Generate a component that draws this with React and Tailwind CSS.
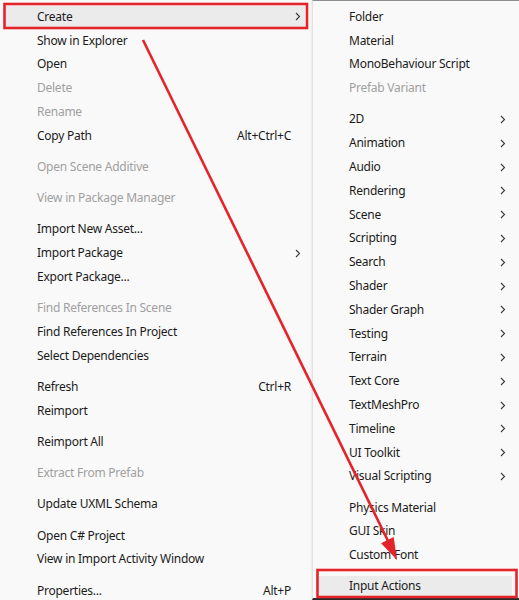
import React from "react"

const left = [
  [{ t: "Create", sub: true, hot: true }, { t: "Show in Explorer" }, { t: "Open" }, { t: "Delete", off: true }, { t: "Rename", off: true }, { t: "Copy Path", k: "Alt+Ctrl+C" }],
  [{ t: "Open Scene Additive", off: true }],
  [{ t: "View in Package Manager", off: true }],
  [{ t: "Import New Asset..." }, { t: "Import Package", sub: true }, { t: "Export Package..." }],
  [{ t: "Find References In Scene", off: true }, { t: "Find References In Project" }, { t: "Select Dependencies" }],
  [{ t: "Refresh", k: "Ctrl+R" }, { t: "Reimport" }],
  [{ t: "Reimport All" }],
  [{ t: "Extract From Prefab", off: true }],
  [{ t: "Update UXML Schema" }],
  [{ t: "Open C# Project" }, { t: "View in Import Activity Window" }],
  [{ t: "Properties...", k: "Alt+P" }],
]

const right = [
  [{ t: "Folder" }, { t: "Material" }, { t: "MonoBehaviour Script" }, { t: "Prefab Variant", off: true }],
  ["2D", "Animation", "Audio", "Rendering", "Scene", "Scripting", "Search", "Shader", "Shader Graph", "Testing", "Terrain", "Text Core", "TextMeshPro", "Timeline", "UI Toolkit", "Visual Scripting"].map((t) => ({ t, sub: true })),
  [{ t: "Physics Material" }, { t: "GUI Skin" }, { t: "Custom Font" }],
  [{ t: "Input Actions", hot: true }],
]

const Chevron = () => (
  <svg width="6" height="9" viewBox="0 0 6 9" className="shrink-0">
    <path d="M1 1 L4.5 4.5 L1 8" fill="none" stroke="#3a3a3a" strokeWidth="1.1" />
  </svg>
)

const Row = ({ item, pl, pr }) => (
  <div className={`relative flex items-center h-[23.8px] ${pl} ${pr} ${item.off ? "text-[#a0a0a0]" : "text-[#1b1b1b]"}`}>
    {item.hot && <div className="absolute inset-y-[1px] left-[6px] right-[7px] bg-[#ebebeb]" />}
    <span className="relative flex-1 whitespace-nowrap">{item.t}</span>
    {item.k && <span className="relative whitespace-nowrap">{item.k}</span>}
    {item.sub && <span className="relative"><Chevron /></span>}
  </div>
)

const Sep = ({ cls }) => (
  <div className="h-[7.4px] flex items-center">
    <div className={`h-px bg-[#dedede] ${cls}`} />
  </div>
)

export default function App() {
  return (
    <div className="relative w-[519px] h-[600px] overflow-hidden bg-[#f9f9f9] flex text-[12px] tracking-[-0.25px] font-['Segoe_UI','Noto_Sans',sans-serif]">
      {/* main context menu */}
      <div className="w-[312px] pt-[5px] flex flex-col">
        {left.map((g, i) => (
          <div key={i}>
            {i > 0 && <Sep cls="ml-[8px] mr-[5px]" />}
            {g.map((it) => (
              <Row key={it.t} item={it} pl="pl-[37px]" pr={it.sub ? "pr-[11px]" : "pr-[21px]"} />
            ))}
          </div>
        ))}
      </div>

      {/* create submenu */}
      <div className="flex-1 pt-[4px] border-t border-l border-t-[#8c8c8c] border-l-[#e2e2e2] flex flex-col border-b-2 border-b-[#2a2a2a] shadow-[-1px_0_2px_rgba(0,0,0,0.06)]">
        {right.map((g, i) => (
          <div key={i}>
            {i > 0 && <Sep cls="ml-[7px] mr-[7px]" />}
            {g.map((it) => (
              <Row key={it.t} item={it} pl="pl-[36px]" pr="pr-[13px]" />
            ))}
          </div>
        ))}
      </div>

      {/* annotation */}
      <svg className="absolute inset-0 pointer-events-none" width="519" height="600">
        <rect x="4.5" y="4" width="302.5" height="24" fill="none" stroke="#e3242b" strokeWidth="2.6" />
        <rect x="317.5" y="570" width="199" height="27" fill="none" stroke="#e3242b" strokeWidth="2.6" />
        <line x1="143" y1="40" x2="390" y2="545" stroke="#e3242b" strokeWidth="2.6" />
        <polygon points="397,560 393.7,537.1 381.1,543.3" fill="#e3242b" />
      </svg>
    </div>
  )
}
